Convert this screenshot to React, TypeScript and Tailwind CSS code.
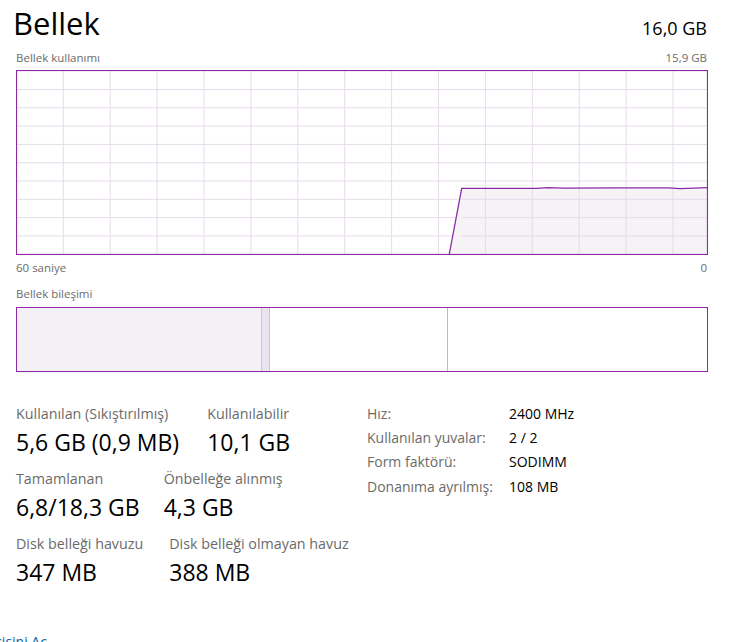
import React from 'react'

const font = { fontFamily: '"Segoe UI", "Open Sans", "Noto Sans", sans-serif' }

const PURPLE = '#8b2aa3'
const GRID = '#e6dbea'
const FILL = '#f4f1f6'

function UsageChart() {
  const w = 692
  const h = 185
  const vLines = Array.from({ length: 14 }, (_, k) => 47.3 + k * 46.9)
  const hLines = Array.from({ length: 9 }, (_, k) => 19.5 + k * 18.3)
  const pts: [number, number][] = [
    [433.3, 184],
    [445.7, 118.3],
    [520, 118.3],
    [532, 117.6],
    [548, 118.2],
    [600, 117.8],
    [652, 117.8],
    [664, 118.6],
    [678, 118.2],
    [691, 117.6],
  ]
  const line = pts.map((p) => p.join(',')).join(' ')
  const area = `${line} 691,184`
  return (
    <svg width={w} height={h} className="block">
      <rect x={0} y={0} width={w} height={h} fill="white" />
      {vLines.map((x) => (
        <line key={`v${x}`} x1={x} y1={0} x2={x} y2={h} stroke={GRID} strokeWidth={1} />
      ))}
      {hLines.map((y) => (
        <line key={`h${y}`} x1={0} y1={y} x2={w} y2={y} stroke={GRID} strokeWidth={1} />
      ))}
      <polygon points={area} fill={FILL} fillOpacity={0.85} />
      {vLines
        .filter((x) => x > 440)
        .map((x) => (
          <line key={`vv${x}`} x1={x} y1={118} x2={x} y2={h} stroke={GRID} strokeWidth={1} />
        ))}
      {hLines
        .filter((y) => y > 118)
        .map((y) => (
          <line key={`hh${y}`} x1={446} y1={y} x2={w} y2={y} stroke={GRID} strokeWidth={1} />
        ))}
      <polyline points={line} fill="none" stroke={PURPLE} strokeWidth={1.3} />
      <rect x={0.5} y={0.5} width={w - 1} height={h - 1} fill="none" stroke={PURPLE} strokeWidth={1.2} />
    </svg>
  )
}

function Stat({ label, value }: { label: string; value: string }) {
  return (
    <div className="flex flex-col">
      <span className="text-[14.3px] leading-[20px] text-[#6b6b6b] whitespace-nowrap">{label}</span>
      <span className="text-[23px] leading-[32px] text-black whitespace-nowrap mt-[2px]">{value}</span>
    </div>
  )
}

export default function App() {
  const specs = [
    ['Hız:', '2400 MHz'],
    ['Kullanılan yuvalar:', '2 / 2'],
    ['Form faktörü:', 'SODIMM'],
    ['Donanıma ayrılmış:', '108 MB'],
  ]
  return (
    <div className="relative w-[738px] h-[642px] overflow-hidden bg-white" style={font}>
      <div className="pl-[16px] pr-[31px]">
        <div className="flex items-end justify-between pt-[1px]">
          <span className="text-[31px] leading-[44px] text-black -ml-[3px]">Bellek</span>
          <span className="text-[18px] leading-[26px] text-black mb-[4px]">16,0 GB</span>
        </div>
        <div className="flex justify-between text-[11.5px] leading-[16px] text-[#6b6b6b] mt-[5px]">
          <span>Bellek kullanımı</span>
          <span>15,9 GB</span>
        </div>
        <div className="mt-[4px]">
          <UsageChart />
        </div>
        <div className="flex justify-between text-[11.5px] leading-[16px] text-[#6b6b6b] mt-[5px]">
          <span>60 saniye</span>
          <span>0</span>
        </div>
        <div className="text-[11.5px] leading-[16px] text-[#6b6b6b] mt-[10px]">Bellek bileşimi</div>
        <div className="mt-[5px] flex h-[65px] w-[692px] border-[1.2px] border-[#8b2aa3]">
          <div className="w-[244px] bg-[#f4f1f6]" />
          <div className="w-[9px] bg-[#ebe3ef] border-l border-r border-[#d2c0d8]" />
          <div className="w-[178px] border-r border-[#c6b3cb]" />
          <div className="flex-1" />
        </div>

        <div className="flex mt-[32px]">
          <div className="w-[351px] flex flex-col gap-[11px]">
            <div className="flex gap-[28px]">
              <Stat label="Kullanılan (Sıkıştırılmış)" value="5,6 GB (0,9 MB)" />
              <Stat label="Kullanılabilir" value="10,1 GB" />
            </div>
            <div className="flex gap-[24px]">
              <Stat label="Tamamlanan" value="6,8/18,3 GB" />
              <Stat label="Önbelleğe alınmış" value="4,3 GB" />
            </div>
            <div className="flex gap-[26px]">
              <Stat label="Disk belleği havuzu" value="347 MB" />
              <Stat label="Disk belleği olmayan havuz" value="388 MB" />
            </div>
          </div>
          <div className="grid grid-cols-[142px_auto] content-start text-[14px] leading-[24.2px] -mt-[2px]">
            {specs.map(([k, v]) => (
              <React.Fragment key={k}>
                <span className="text-[#6b6b6b] whitespace-nowrap">{k}</span>
                <span className="text-black whitespace-nowrap">{v}</span>
              </React.Fragment>
            ))}
          </div>
        </div>
      </div>
      <div className="absolute left-[-88px] top-[632px] text-[14px] leading-[20px] text-[#0063b1] whitespace-nowrap">
        Kaynak İzleyicisini Aç
      </div>
    </div>
  )
}
